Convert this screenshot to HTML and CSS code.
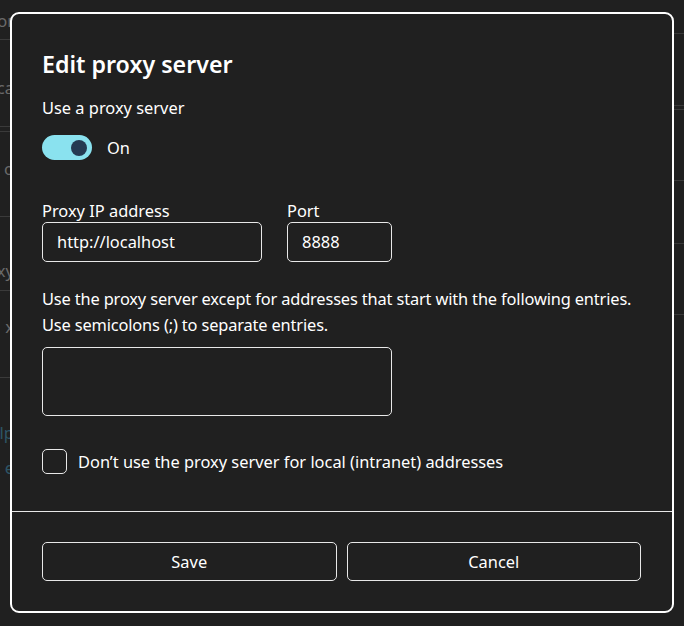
FILE: index.html
```html
<!DOCTYPE html>
<html lang="en">
<head>
<meta charset="utf-8">
<title>Edit proxy server</title>
<link rel="stylesheet" href="styles.css">
</head>
<body>
<div class="screen">
  <div class="strip strip-left">
    <div class="bg-row r1"><span class="frag">or</span></div>
    <div class="bg-row r2"><span class="frag">ca</span></div>
    <div class="bg-row r3"></div>
    <div class="bg-row r4"><span class="frag">o</span></div>
    <div class="bg-row r5"><span class="frag">xy</span></div>
    <div class="bg-row r6"><span class="frag">x</span></div>
    <div class="bg-tail">
      <span class="frag link">lp</span>
      <span class="frag link">e</span>
    </div>
  </div>

  <div class="dialog">
    <div class="dialog-body">
      <h1 class="title">Edit proxy server</h1>
      <div class="label">Use a proxy server</div>
      <div class="toggle-row">
        <span class="toggle"><span class="knob"></span></span>
        <span class="toggle-text">On</span>
      </div>

      <div class="fields">
        <div class="field field-ip">
          <div class="field-label">Proxy IP address</div>
          <div class="input">http://localhost</div>
        </div>
        <div class="field field-port">
          <div class="field-label">Port</div>
          <div class="input">8888</div>
        </div>
      </div>

      <p class="desc">Use the proxy server except for addresses that start with the following entries.<br>Use semicolons (;) to separate entries.</p>
      <div class="textarea"></div>

      <div class="check-row">
        <span class="checkbox"></span>
        <span class="check-text">Don’t use the proxy server for local (intranet) addresses</span>
      </div>
    </div>
    <div class="dialog-footer">
      <button class="btn">Save</button>
      <button class="btn">Cancel</button>
    </div>
  </div>

  <div class="strip strip-right">
    <div class="bg-row q1"></div>
    <div class="bg-row q2"></div>
    <div class="bg-row q3"></div>
    <div class="bg-row q4"></div>
    <div class="bg-row q5"></div>
    <div class="bg-row q6"></div>
  </div>
</div>
</body>
</html>
```

FILE: styles.css
```css
html, body {
  margin: 0;
  padding: 0;
  background: #202020;
}

body {
  width: 684px;
  height: 626px;
  overflow: hidden;
  font-family: "Noto Sans", "Open Sans", sans-serif;
  color: #ffffff;
}

.screen {
  display: grid;
  grid-template-columns: 10px 664px 10px;
  height: 626px;
}

/* background settings page peeking out */
.strip {
  display: flex;
  flex-direction: column;
  overflow: hidden;
}

.bg-row {
  flex: none;
  border-bottom: 1px solid #3a3a3a;
  display: flex;
  align-items: center;
  justify-content: flex-end;
  overflow: hidden;
  box-sizing: border-box;
}

.frag {
  font-size: 16.5px;
  color: #6a6a6a;
  white-space: nowrap;
  margin-right: -4px;
}

.frag.link {
  color: #2e5566;
}

.r1 { height: 40px; align-items: flex-start; padding-top: 9px; }
.r2 { height: 87px; padding-top: 8px; }
.r3 { height: 5px; }
.r4 { height: 85px; align-items: flex-start; padding-top: 25px; }
.r5 { height: 74px; align-items: flex-end; padding-bottom: 8px; }
.r6 { height: 87px; align-items: flex-start; padding-top: 24px; }

.bg-tail {
  display: flex;
  flex-direction: column;
  align-items: flex-end;
  padding-top: 43px;
  gap: 12px;
}

.q1 { height: 34px; }
.q2 { height: 72px; }
.q3 { height: 4px; }
.q4 { height: 71px; }
.q5 { height: 63px; }
.q6 { height: 71px; }

/* dialog */
.dialog {
  margin-top: 12px;
  height: 601px;
  box-sizing: border-box;
  border: 2px solid #ffffff;
  border-radius: 9px;
  background: #202020;
  display: flex;
  flex-direction: column;
  overflow: hidden;
}

.dialog-body {
  flex: 1;
  padding: 33px 30px 0 30px;
  font-size: 16.4px;
  line-height: 24px;
}

.title {
  margin: 0;
  font-size: 23.2px;
  font-weight: 600;
  line-height: 34px;
}

.label {
  margin-top: 15px;
}

.toggle-row {
  display: flex;
  align-items: center;
  margin-top: 15px;
  height: 25px;
}

.toggle {
  width: 50px;
  height: 25px;
  border-radius: 13px;
  background: #8ae2ef;
  display: flex;
  align-items: center;
  justify-content: flex-end;
  padding-right: 5px;
  box-sizing: border-box;
}

.knob {
  width: 16px;
  height: 16px;
  border-radius: 50%;
  background: #253a52;
}

.toggle-text {
  margin-left: 15px;
}

.fields {
  display: flex;
  gap: 25px;
  margin-top: 40px;
}

.field-label {
  line-height: 22px;
}

.input {
  height: 40px;
  box-sizing: border-box;
  border: 1px solid #e8e8e8;
  border-radius: 5px;
  padding: 0 14px;
  display: flex;
  align-items: center;
}

.field-ip .input { width: 220px; }
.field-port .input { width: 105px; }

.desc {
  margin: 24px 0 0 0;
  line-height: 26px;
  white-space: nowrap;
  letter-spacing: -0.15px;
}

.textarea {
  margin-top: 9px;
  width: 350px;
  height: 69px;
  box-sizing: border-box;
  border: 1px solid #e8e8e8;
  border-radius: 5px;
}

.check-row {
  display: flex;
  align-items: center;
  margin-top: 33px;
}

.checkbox {
  width: 25px;
  height: 25px;
  box-sizing: border-box;
  border: 1.5px solid #e8e8e8;
  border-radius: 5px;
}

.check-text {
  margin-left: 11px;
}

.dialog-footer {
  flex: none;
  height: 100px;
  box-sizing: border-box;
  border-top: 1px solid #e8e8e8;
  padding: 30px 31px 30px 30px;
  display: grid;
  grid-template-columns: 1fr 1fr;
  gap: 10px;
}

.btn {
  font-family: inherit;
  font-size: 16.4px;
  color: #ffffff;
  background: #202020;
  border: 1px solid #e8e8e8;
  border-radius: 5px;
  height: 39px;
}
```
